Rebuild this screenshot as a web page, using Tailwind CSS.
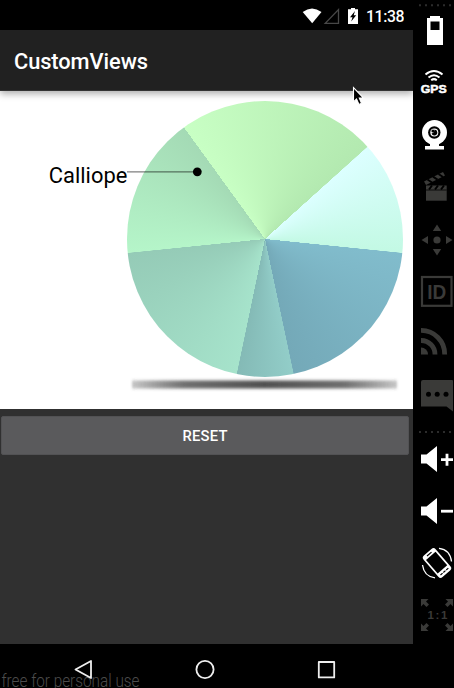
<!DOCTYPE html>
<html lang="en">
<head>
<meta charset="utf-8">
<title>CustomViews</title>
<script src="https://cdn.jsdelivr.net/npm/@tailwindcss/browser@4"></script>
</head>
<body class="flex h-[688px] w-[454px] overflow-hidden bg-black font-['Roboto',sans-serif]">
<div class="flex w-[413px] shrink-0 flex-col">
  <header class="flex h-[30px] shrink-0 items-center justify-end bg-black pr-[9px]">
    <svg class="h-[30px] w-[64px]" viewBox="300 0 64 30">
      <path d="M302.700 12Q312 5 321.500 12L312.200 23.300Z" fill="#fff"/>
      <path d="M338.500 9.500V23.300H325.200Z" fill="none" stroke="#484848" stroke-width="1.300"/>
      <path d="M351 8h4v1.200h3V24h-10V9.200h3Z" fill="#fff"/>
      <path d="M355 11L350 17.300h2.500L351.200 21.500L356.200 15.200h-2.500Z" fill="#000"/>
    </svg>
    <svg class="h-[30px] w-[40px]" viewBox="364 0 40 30"><text x="366" y="22" font-size="15.800" font-weight="500" fill="#fff" textLength="38.500">11:38</text></svg>
  </header>
  <div class="z-10 flex h-[61px] shrink-0 items-center border-b border-[#333] bg-[#212121] shadow-[0_3px_7px_rgba(0,0,0,0.32)] [clip-path:inset(0_0_-12px_0)]">
    <svg class="h-[60px] w-[200px]" viewBox="0 30 200 60"><text x="14" y="69" font-size="21.800" font-weight="500" fill="#fff" textLength="134">CustomViews</text></svg>
  </div>
  <main class="relative h-[318px] shrink-0 bg-white pl-[127px] pt-[10px]">
    <div class="h-[275.500px] w-[275.500px] rounded-full bg-[conic-gradient(from_324deg,#c8ffc4_0deg,#b3e9b0_83.9deg,#dcffff_84.1deg,#c3f9e4_131.7deg,#81bccc_131.9deg,#74a9b8_203.9deg,#92cdc8_204.1deg,#84bab6_227.7deg,#a6e3cb_227.9deg,#95cbb7_300.1deg,#b5f5c9_300.3deg,#a4dab5_360deg)]"></div>
    <svg class="absolute inset-0 h-[318px] w-[413px]" viewBox="0 91 413 318">
      <defs>
        <linearGradient id="sx"><stop offset="0" stop-color="#444" stop-opacity=".3"/><stop offset=".2" stop-color="#555" stop-opacity=".85"/><stop offset=".5" stop-color="#505050"/><stop offset=".8" stop-color="#555" stop-opacity=".85"/><stop offset="1" stop-color="#444" stop-opacity=".3"/></linearGradient>
        <filter id="blur" x="-5%" y="-100%" width="110%" height="300%"><feGaussianBlur stdDeviation="1.200 1.600"/></filter>
      </defs>
      <rect x="132" y="380.500" width="265" height="8" fill="url(#sx)" filter="url(#blur)"/>
      <text x="48.800" y="183" font-size="22.300" fill="#000" textLength="78.500" lengthAdjust="spacingAndGlyphs">Calliope</text>
      <path d="M127 171.800H197" stroke="#000" stroke-opacity=".5" stroke-width="1.200"/>
      <circle cx="197.300" cy="171.800" r="4.400"/>
    </svg>
  </main>
  <section class="h-[235px] shrink-0 bg-[#303030] pl-[1px] pt-[7px]">
    <button class="flex h-[39px] w-[408px] items-center justify-center rounded-[2px] border border-[#525254] bg-[#5a5a5c]">
      <svg class="h-[24px] w-[50px]" viewBox="180 424 50 24"><text x="182.500" y="441" font-size="14.800" font-weight="500" fill="#fff" textLength="45">RESET</text></svg>
    </button>
  </section>
  <nav class="h-[44px] shrink-0 bg-black">
    <svg class="h-[44px] w-[413px]" viewBox="0 644 413 44">
      <text x="1.500" y="686.500" font-size="17.500" font-weight="300" fill="#4c4c4c" textLength="138" lengthAdjust="spacingAndGlyphs">free for personal use</text>
      <g fill="none" stroke="#eee" stroke-width="1.800" stroke-linejoin="round">
        <path d="M91 661V678L75.500 669.500Z"/><circle cx="205" cy="669.500" r="8.600"/><rect x="318.800" y="662" width="15.400" height="15.400"/>
      </g>
    </svg>
  </nav>
</div>
<aside class="flex w-[41px] shrink-0 flex-col bg-black">
  <svg class="h-[54px] w-[41px]" viewBox="413 0 41 54">
    <path d="M419 5.200H454" stroke="#2c2c2c" stroke-width="2" stroke-dasharray="2 4"/>
    <path fill="#fff" fill-rule="evenodd" d="M430 16h10v2h3v27h-16V18h3ZM430.500 21.500v8.500h9v-8.500Z"/>
  </svg>
  <svg class="h-[56px] w-[41px]" viewBox="413 54 41 56">
    <g fill="none" stroke="#fff" stroke-width="2"><path d="M425.500 74.500Q434 67.500 442.500 74.500"/><path d="M428.500 77.500Q434 73 439.500 77.500"/><path d="M431.200 80.200Q434 78 436.800 80.200"/></g>
    <text x="420.800" y="93" font-family="Liberation Sans,sans-serif" font-size="11.500" font-weight="700" fill="#fff" stroke="#fff" stroke-width=".5" textLength="26" lengthAdjust="spacingAndGlyphs">GPS</text>
  </svg>
  <svg class="h-[50px] w-[41px]" viewBox="413 110 41 50">
    <circle cx="434.500" cy="132.500" r="12.500" fill="#fff"/><path d="M430 143h9v3h5v3.500h-19V146h5Z" fill="#fff"/>
    <circle cx="434.300" cy="132.500" r="6.200"/><circle cx="434.300" cy="132.500" r="4" fill="#fff"/><path d="M434.500 129.500A3 3 0 1 1 431.500 133.500Q434.500 133 434.500 129.500Z"/><circle cx="433" cy="131" r="1.600"/>
  </svg>
  <svg class="h-[54px] w-[41px]" viewBox="413 160 41 54">
    <path d="M426 185.500h20.700v15.200H426Z" fill="#3a3a38"/>
    <path d="M424 181.500L443 172L445 175.500L426 185Z" fill="#3a3a38"/>
    <path d="M427.500 179.500l4.500 3M433 176.700l4.500 3M438.500 174l4.500 3M432 185.500l-3 4M438 185.500l-3 4M444 185.500l-3 4" stroke="#000" stroke-width="2"/>
    <path d="M426 190h20.700" stroke="#000" stroke-width=".8"/>
  </svg>
  <svg class="h-[52px] w-[41px]" viewBox="413 214 41 52" fill="#3a3a38"><circle cx="437" cy="240" r="3.600"/><path d="M437 224.500l4.200 6.500h-8.400ZM437 255.500l4.200-6.500h-8.400ZM421.500 240l6.500-4v8ZM452.500 240l-6.500-4v8Z"/></svg>
  <svg class="h-[50px] w-[41px]" viewBox="413 266 41 50"><rect x="422" y="277" width="29.500" height="28.800" fill="none" stroke="#3a3a38" stroke-width="2.200"/><text x="427.300" y="299" font-family="Liberation Sans,sans-serif" font-size="20" font-weight="700" fill="#3a3a38" textLength="19" lengthAdjust="spacingAndGlyphs">ID</text></svg>
  <svg class="h-[54px] w-[41px]" viewBox="413 316 41 54" fill="none" stroke="#3a3a38" stroke-width="4.800"><path d="M421 330.400A23.600 23.600 0 0 1 444.700 354.500M421 340.500A13.800 13.800 0 0 1 435 354.500"/><path d="M421 347.500A7 7 0 0 1 428 354.500H421Z" fill="#3a3a38" stroke="none"/></svg>
  <svg class="h-[68px] w-[41px]" viewBox="413 370 41 68"><path d="M423 380h29q1 0 1 1v30.500l-6.500-5H421V382q0-2 2-2Z" fill="#3a3a38"/><circle cx="428.500" cy="394.300" r="2.500"/><circle cx="437.200" cy="394.300" r="2.500"/><circle cx="446" cy="394.300" r="2.500"/><path d="M419 432H454" stroke="#2c2c2c" stroke-width="2" stroke-dasharray="2 4"/></svg>
  <svg class="h-[48px] w-[41px]" viewBox="413 438 41 48"><path d="M421 454.500h5.500l10.500-8.500V472l-10.500-8.500H421Z" fill="#fff"/><path d="M441 459.700h12M447 453.700v12" stroke="#fff" stroke-width="2.800"/></svg>
  <svg class="h-[50px] w-[41px]" viewBox="413 486 41 50"><path d="M421 506.500h5.500l10.500-8.500V524l-10.500-8.500H421Z" fill="#fff"/><path d="M441 511.200h12" stroke="#fff" stroke-width="2.800"/></svg>
  <svg class="h-[56px] w-[41px]" viewBox="413 536 41 56">
    <g transform="rotate(-41 437 563)"><rect x="429" y="548.800" width="16" height="28.400" rx="3" fill="#fff"/><rect x="430.700" y="553.500" width="12.600" height="17.800" fill="#000"/><path d="M434 551.200h6M431.800 574.300h2.800M435.600 574.300h2.800M439.400 574.300h2.800" stroke="#000" stroke-width="1.200"/></g>
    <path d="M439 548.300Q450 549.500 451.500 561.500M422.500 565Q424 576.500 435 577.800" fill="none" stroke="#fff" stroke-width="1.300"/>
  </svg>
  <svg class="h-[52px] w-[41px]" viewBox="413 592 41 52">
    <g fill="#3a3a38"><path d="M421 599h7.500l-2.500 2.500 3 3-2.500 2.500-3-3-2.500 2.500Z"/><path d="M453 599h-7.500l2.500 2.500-3 3 2.500 2.500 3-3 2.500 2.500ZM421 631h7.500l-2.500-2.500 3-3-2.500-2.500-3 3-2.500-2.500ZM453 631h-7.500l2.500-2.500-3-3 2.500-2.500 3 3 2.500-2.500Z"/></g>
    <text x="427.500" y="619" font-size="11.500" font-family="Liberation Sans,sans-serif" font-weight="700" fill="#3a3a38" textLength="20">1:1</text>
  </svg>
</aside>
<svg class="absolute left-[350px] top-[84px] z-20 h-[24px] w-[16px]" viewBox="350 84 16 24"><path d="M353.500 87.500V102L356.500 99L359 104.500L361.500 103.300L359.300 98H363.500Z" fill="#000" stroke="#fff" stroke-width="1.100"/></svg>
</body>
</html>
